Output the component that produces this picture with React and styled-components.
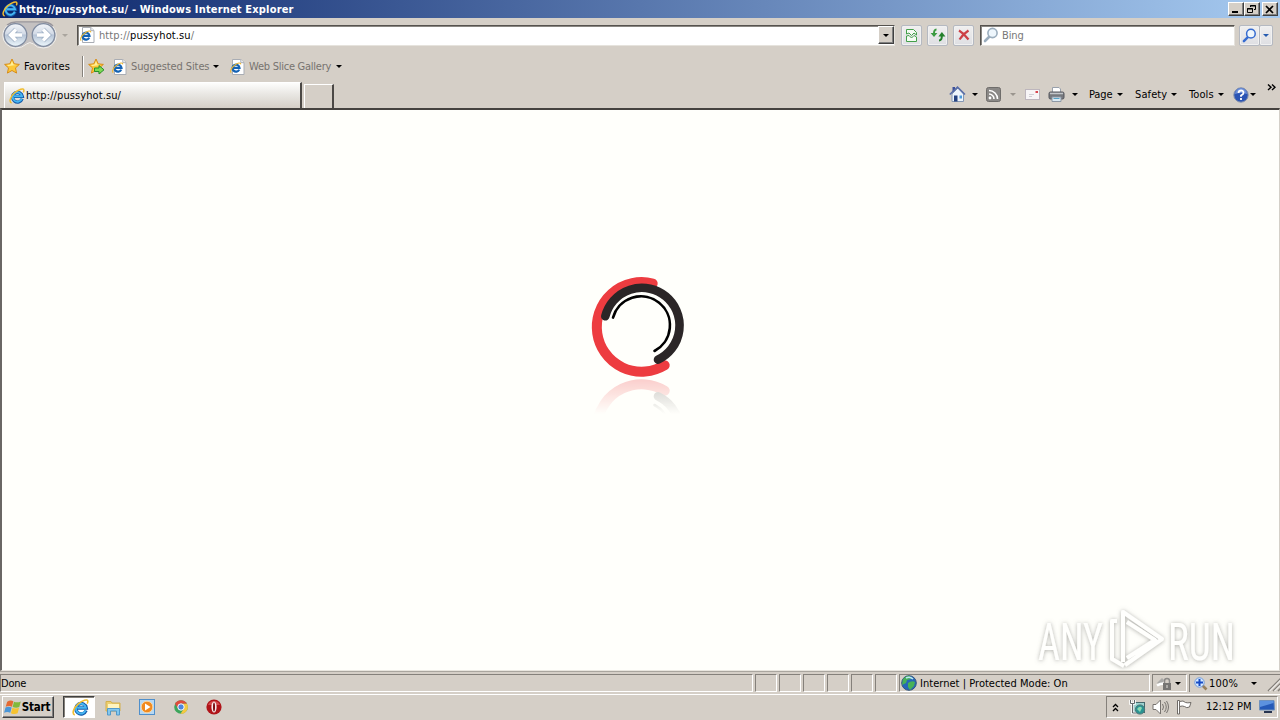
import React from 'react';
import styled, { createGlobalStyle, css } from 'styled-components';

const face = '#d5cfc7';
const ui = '"DejaVu Sans Condensed", "DejaVu Sans", sans-serif';

const GlobalStyle = createGlobalStyle`
  * { box-sizing: border-box; }
  body { margin: 0; overflow: hidden; }
  svg { display: block; flex: none; }
`;

const Desktop = styled.div`
  width: 1280px;
  height: 720px;
  display: flex;
  flex-direction: column;
  background: ${face};
  color: #000;
  font-family: ${ui};
  font-stretch: condensed;
  font-size: 11px;
  line-height: 14px;
`;
const Text = styled.span`
  flex: none;
  width: ${p => p.$w}px;
  margin-left: ${p => p.$ml || 0}px;
  padding-top: ${p => p.$drop || 0}px;
  letter-spacing: ${p => p.$ls ?? -0.1}px;
  color: ${p => p.$color || 'inherit'};
  white-space: nowrap;
`;
const Slot = styled.span`
  flex: none;
  display: block;
  margin-left: ${p => p.$ml || 0}px;
`;
const Arrow = styled.i`
  flex: none;
  width: 0;
  margin-left: ${p => p.$ml || 0}px;
  border: 3px solid transparent;
  border-top-color: ${p => p.$color || '#000'};
  border-bottom: 0;
`;

const sunken = css`
  border: 1px solid;
  border-color: #85817b #fff #fff #85817b;
`;
const raised = css`
  background: ${face};
  border: 1px solid;
  border-color: #fff #404040 #404040 #fff;
  box-shadow: inset -1px -1px #808080;
`;

/* title bar */
const TitleBar = styled.header`
  height: 18px;
  display: flex;
  align-items: center;
  padding-left: 2px;
  background: linear-gradient(90deg, #0a246a, #a6caf0);
  color: #fff;
  font-weight: bold;
`;
const WindowButtons = styled.div`
  display: flex;
  margin-left: auto;
  padding-right: 2px;
`;
const WindowButton = styled.button`
  ${raised}
  width: 16px;
  height: 14px;
  padding: 0;
  margin-left: ${p => p.$gap || 0}px;
  display: flex;
  align-items: center;
  justify-content: center;
`;

/* navigation row */
const NavRow = styled.div`
  height: 34px;
  display: flex;
  align-items: center;
  padding-left: 2px;
`;
const Field = styled.div`
  flex: none;
  width: ${p => p.$w}px;
  height: 21px;
  margin-left: ${p => p.$ml}px;
  display: flex;
  align-items: center;
  padding-left: 2px;
  background: #fff;
  border: 1px solid;
  border-color: #55524e #e6e3dd #e6e3dd #55524e;
  box-shadow: inset 1px 1px #8a8782;
`;
const DropButton = styled.button`
  ${raised}
  width: 16px;
  height: 18px;
  padding: 0;
  margin-left: auto;
  display: flex;
  align-items: center;
  justify-content: center;
`;
const ToolButton = styled.button`
  flex: none;
  width: ${p => p.$w || 21}px;
  height: 21px;
  margin-left: ${p => p.$ml}px;
  padding: 0;
  display: flex;
  align-items: center;
  justify-content: center;
  background: linear-gradient(#f0efef, #dedfe3);
  border: 1px solid #b5b9c1;
  border-radius: 2px;
  box-shadow: inset 0 0 0 1px #f1f1f1;
`;

/* favorites row */
const FavoritesRow = styled.div`
  height: 29px;
  display: flex;
  align-items: center;
  padding-left: 4px;
`;
const Divider = styled.i`
  height: 21px;
  margin-left: 11px;
  border-left: 1px solid #85817b;
  border-right: 1px solid #fff;
`;

/* tab row */
const TabRow = styled.div`
  height: 27px;
  display: flex;
  align-items: flex-end;
  padding-left: 4px;
`;
const Tab = styled.div`
  width: 298px;
  height: 26px;
  display: flex;
  align-items: center;
  padding-left: 4px;
  background: linear-gradient(#fdfdfc, #e9e7e3 45%, ${face});
  border-left: 1px solid #fff;
  border-top: 1px solid #fff;
  border-right: 2px solid #4b4845;
`;
const NewTab = styled.div`
  width: 30px;
  height: 24px;
  margin-left: 2px;
  border: 1px solid #fff;
  border-right: 2px solid #4b4845;
  border-bottom: 0;
`;
const CommandBar = styled.div`
  height: 27px;
  margin-left: auto;
  display: flex;
  align-items: center;
`;
const Chevron = styled(Slot)`
  align-self: flex-start;
  margin-right: 4px;
  padding-top: 3px;
`;

/* page */
const Page = styled.main`
  position: relative;
  height: 563px;
  display: flex;
  justify-content: center;
  padding-top: 165px;
  padding-right: 7px;
  background: #fffffb;
  border-top: 2px solid #45423f;
  border-left: 2px solid #6a6764;
  border-right: 1px solid #d4d0c8;
  border-bottom: 1px solid #e9e6df;
`;
const Watermark = styled.svg`
  position: absolute;
  left: 1026px;
  top: 491px;
  overflow: visible;
`;

/* status bar */
const StatusBar = styled.footer`
  height: 24px;
  display: flex;
  padding: 2px 0 2px;
  border-top: 1px solid #aaa69f;
  border-bottom: 1px solid #fff;
  gap: 2px;
`;
const Panel = styled.div`
  ${sunken}
  width: ${p => p.$w}px;
  flex: none;
  display: flex;
  align-items: center;
`;
const Grip = styled.div`
  flex: 1;
  display: flex;
  align-items: center;
  border-top: 1px solid #85817b;
  border-left: 1px solid #85817b;
`;

/* task bar */
const TaskBar = styled.nav`
  height: 25px;
  display: flex;
  align-items: center;
  padding: 0 2px 1px;
`;
const Start = styled.button`
  ${raised}
  width: 52px;
  height: 22px;
  padding: 0 0 0 1px;
  display: flex;
  align-items: center;
  font: bold 11.5px/14px ${ui};
  font-stretch: condensed;
`;
const ActiveTask = styled.div`
  width: 32px;
  height: 22px;
  margin-left: 9px;
  padding-left: 2px;
  display: flex;
  align-items: center;
  justify-content: center;
  background: #fff;
  border: 1px solid;
  border-color: #404040 #fff #fff #404040;
  box-shadow: inset 1px 1px #85817b;
`;
const Tray = styled.div`
  ${sunken}
  width: 172px;
  height: 22px;
  margin-left: auto;
  display: flex;
  align-items: center;
`;

const Explorer = ({ size = 16 }) => (
  <svg width={size} height={size} viewBox="0 0 16 16">
    <path d="M13.200 10.800A4.900 4.900 0 1 1 13.400 8.400H5" fill="none" stroke="#1259a8" strokeWidth="3.200" />
    <path d="M12.800 10.600A4.700 4.700 0 1 1 13 8.200H5" fill="none" stroke="#45b6f2" strokeWidth="1.900" />
    <path d="M2.600 15C-.4 14 1.400 8.400 5.600 4.800 9.800 1.200 14.800-.4 14.900 2.200q0 1-.6 2.200" fill="none" stroke="#f1bd2f" strokeWidth="1.500" />
  </svg>
);

const PageIcon = () => (
  <svg width="15" height="16" viewBox="0 0 15 16">
    <path d="M2.500.5h8.300l3.200 3v12H2.500z" fill="#fff" stroke="#a9adb4" />
    <path d="M10.800.5v3.200H14" fill="#eef1f5" stroke="#a9adb4" />
    <path d="M9.200 10.600A3.500 3.500 0 1 1 9.500 8.800H3" fill="none" stroke="#1563b4" strokeWidth="2.200" />
    <path d="M1.200 13.600C-.4 12.500 1.500 8.500 4.600 6.200 7.600 3.800 11 3.200 10.600 5.400" fill="none" stroke="#edb732" strokeWidth="1.100" />
  </svg>
);

const RoundButtons = () => (
  <svg width="56" height="28" viewBox="0 0 56 28">
    <defs>
      <linearGradient id="orb" x2="0" y2="1">
        <stop offset="0" stopColor="#f2f5f9" />
        <stop offset=".45" stopColor="#d2dae6" />
        <stop offset=".5" stopColor="#b6c4d6" />
        <stop offset="1" stopColor="#eef8fd" />
      </linearGradient>
    </defs>
    <path d="M13.500 1.500h28a12 12 0 0 1 0 25.500q-7 0-10-4-4-3-7 0-4 4-11 4a12 12 0 0 1 0-25.500z" fill="#c4c1c1" stroke="#f1f0ee" />
    <path d="M5 4Q9 1 14 1h27q6 0 10 4" fill="none" stroke="#98959b" strokeWidth="1.400" />
    <circle cx="13.500" cy="14" r="11.300" fill="url(#orb)" stroke="#7f8ba0" strokeWidth="1.200" />
    <circle cx="41.500" cy="14" r="11.300" fill="url(#orb)" stroke="#7f8ba0" strokeWidth="1.200" />
    <g fill="none" stroke="#9badc3" strokeWidth="4.800">
      <path d="M20 14H9M14 8.500L8.500 14l5.500 5.500M35 14h11M41 8.500l5.500 5.500-5.500 5.500" />
    </g>
    <g fill="none" stroke="#fff" strokeWidth="3.400">
      <path d="M20 14H9M14 8.500L8.500 14l5.500 5.500M35 14h11M41 8.500l5.500 5.500-5.500 5.500" />
    </g>
  </svg>
);

const Star = ({ add }) => (
  <svg width="17" height="17" viewBox="0 0 17 17">
    <path d="M8 1l2.200 4.800 5.200.6-3.900 3.500 1.100 5.200L8 12.500l-4.600 2.600 1.100-5.200L.6 6.400l5.200-.6z" fill="#fdc839" stroke="#d5860f" strokeWidth=".9" />
    <path d="M8 3l1.400 3.500 3 .5-8 1-1.600-1 3.700-.4z" fill="#fff09a" />
    {add && <path d="M6.500 10h4.500V7.600l5 4.200-5 4.200v-2.500H6.500z" fill="#7edb54" stroke="#27902b" />}
  </svg>
);

const Lens = ({ color, fill = '#eef6fc', size = 16 }) => (
  <svg width={size} height={size} viewBox="0 0 16 16">
    <path d="M6.500 9.500L2 14" stroke={color} strokeWidth="2.600" strokeLinecap="round" />
    <circle cx="9.500" cy="6" r="4.600" fill={fill} stroke={color} strokeWidth="1.600" />
  </svg>
);

const Compat = () => (
  <svg width="13" height="15" viewBox="0 0 13 15" fill="#f5fbf3" stroke="#43a04a">
    <path d="M1.500 6V1.500h7l3 3V7L9 5 6.500 7.500 4 5z" />
    <path d="M1.500 8v5.500h10V9L9 7.500 6.500 10 4 7.500z" />
  </svg>
);

const Refresh = () => (
  <svg width="16" height="14" viewBox="0 0 16 14">
    <path d="M6.500 1.500Q3.800 1.500 4 6" fill="none" stroke="#3a9b40" strokeWidth="2" />
    <path d="M.6 5h6.800L4 9z" fill="#3a9b40" />
    <path d="M9 12.500q3 0 2.800-5" fill="none" stroke="#23802b" strokeWidth="2" />
    <path d="M8.400 8.500h7L11.900 4z" fill="#23802b" />
  </svg>
);

const Stop = () => (
  <svg width="12" height="12" viewBox="0 0 12 12">
    <path d="M1 1.500q5 3 9.500 9M10.500 1.500Q5 5 1.500 10.500" fill="none" stroke="#cc4046" strokeWidth="2.200" />
  </svg>
);

const Home = () => (
  <svg width="17" height="17" viewBox="0 0 17 17">
    <path d="M3.500 1H6v5H3.500z" fill="#3c4f99" />
    <path d="M3 8l6-6 5.500 6v7.500H3z" fill="#edf4fb" stroke="#8497b5" />
    <path d="M.8 8.500L8.500 1.200l7.500 7.300" fill="none" stroke="#586da8" strokeWidth="1.600" />
    <path d="M5 9.500h3.500v6H5z" fill="#24417f" />
    <path d="M10.500 9.500H13v3h-2.500z" fill="#4c9bdb" />
  </svg>
);

const Feed = () => (
  <svg width="15" height="15" viewBox="0 0 15 15">
    <rect x=".5" y=".5" width="14" height="14" rx="2" fill="#8a8886" stroke="#6f6d6b" />
    <circle cx="4" cy="11" r="1.400" fill="#fff" />
    <path d="M3 7a5 5 0 0 1 5 5M3 3.500A8.500 8.500 0 0 1 11.500 12" fill="none" stroke="#fff" strokeWidth="1.600" />
  </svg>
);

const Mail = () => (
  <svg width="15" height="11" viewBox="0 0 15 11">
    <rect x=".5" y=".5" width="14" height="10" fill="#f7f5f6" stroke="#bdb6bd" />
    <path d="M10.500 2H13v2h-2.500z" fill="#d8464e" />
    <path d="M4 5.500h5M4 7.500h3" stroke="#d0ced4" />
  </svg>
);

const Printer = () => (
  <svg width="17" height="17" viewBox="0 0 17 17">
    <path d="M4.500 7V1.500H11L12.500 3v4" fill="#fff" stroke="#98a0ab" />
    <rect x="1" y="6" width="15" height="7" rx="1.500" fill="#77797e" stroke="#55575c" />
    <path d="M2 7.500h13" stroke="#c3c6ca" strokeWidth="1.500" />
    <path d="M4 11h9v4.500H4z" fill="#dceaf3" stroke="#8d98a5" />
    <path d="M5.500 12.500h6" stroke="#56a3c7" />
  </svg>
);

const Help = () => (
  <svg width="16" height="16" viewBox="0 0 16 16">
    <circle cx="8" cy="8" r="7.200" fill="#2b54b4" stroke="#8390ac" />
    <path d="M2 7a6 6 0 0 1 12 0q-6-2-12 0z" fill="#6d8fd8" />
    <path d="M5.500 6q.2-2.500 2.600-2.500T10.500 6Q10.500 7.200 8 8.500v1.300M8 11v2" fill="none" stroke="#fff" strokeWidth="1.800" />
  </svg>
);

const Spinner = () => (
  <svg width="100" height="142" viewBox="0 0 100 142" fill="none" strokeLinecap="round">
    <defs>
      <linearGradient id="fade" x2="0" y2="1">
        <stop offset="0" stopColor="#fff" stopOpacity=".26" />
        <stop offset="1" stopColor="#fff" stopOpacity="0" />
      </linearGradient>
      <mask id="reflection" maskUnits="userSpaceOnUse" x="0" y="103" width="100" height="36">
        <rect y="103" width="100" height="36" fill="url(#fade)" />
      </mask>
      <g id="rings">
        <path d="M65.700 8.500A44.800 44.800 0 1 0 77.700 90.300" stroke="#ed3c40" strokeWidth="10" />
        <path d="M18.300 41.300A37.700 37.700 0 1 1 71 84.600" stroke="#2b2627" strokeWidth="8.600" />
        <path d="M26 42.600A29 29 0 1 1 67.500 76" stroke="#000" strokeWidth="2.600" />
      </g>
    </defs>
    <use href="#rings" />
    <g mask="url(#reflection)">
      <use href="#rings" transform="matrix(1 0 0 -1 0 206)" />
    </g>
  </svg>
);

const Logo = () => (
  <Watermark width="220" height="70" viewBox="0 0 220 70">
    <defs>
      <filter id="halo" x="-10%" y="-20%" width="120%" height="140%">
        <feDropShadow dx="0" dy=".5" stdDeviation="2" floodColor="#77776f" floodOpacity=".6" />
      </filter>
    </defs>
    <g filter="url(#halo)" fill="#fffffd" fontFamily="Roboto, sans-serif" fontSize="51">
      <text x="10" y="59" textLength="65" lengthAdjust="spacingAndGlyphs">ANY</text>
      <text x="140" y="59" textLength="67" lengthAdjust="spacingAndGlyphs">RUN</text>
      <g fill="none" stroke="#fffffd" strokeWidth="4" strokeLinejoin="round">
        <path d="M89 20h-5v38l12 7" />
        <path d="M95 61V11l39 27-37 26M99 21l28 18-28 18" />
      </g>
    </g>
  </Watermark>
);

const Globe = () => (
  <svg width="16" height="16" viewBox="0 0 16 16">
    <circle cx="8" cy="8" r="7.300" fill="#2567b9" stroke="#34567b" />
    <path d="M2 4q4-4 7-3l1 3-4 1-1 3-4 2zM7 8q4-3 7-1l-1 4-4 4-2-3z" fill="#47b257" />
    <path d="M5 3q4-2 7 1" fill="none" stroke="#b9e8f5" strokeWidth="1.500" />
  </svg>
);

const Lock = () => (
  <svg width="16" height="15" viewBox="0 0 16 15">
    <path d="M1 7l5-5 2 2-3 5z" fill="#aaa9a7" />
    <path d="M1 9.500q3-2 7-2" fill="none" stroke="#fff" strokeWidth="2.400" />
    <path d="M8.500 8V5a2.500 2.500 0 0 1 5 0v3" fill="none" stroke="#8b8987" strokeWidth="1.500" />
    <rect x="7" y="7" width="8" height="7" fill="#777573" />
    <path d="M11 9v3" stroke="#e3e0db" />
  </svg>
);

const Zoom = () => (
  <svg width="14" height="14" viewBox="0 0 14 14">
    <path d="M8 8l4.500 4.500" stroke="#97815d" strokeWidth="2.600" />
    <circle cx="5.500" cy="5.500" r="4.700" fill="#d6eaff" stroke="#6f9bdd" />
    <path d="M5.500 2v7M2 5.500h7" stroke="#164bc5" strokeWidth="2" />
  </svg>
);

const WindowsFlag = () => (
  <svg width="17" height="17" viewBox="0 0 16 16">
    <path d="M3 2.500q3-2 5.800-.5L7.500 7.200Q5 5.800 1.600 7.200z" fill="#e46a32" />
    <path d="M9.400 2.500q3 1.300 6.400-.2L14.400 7.600q-3 1.400-6.300-.1z" fill="#82b93b" />
    <path d="M1.400 7.900q3-1.400 5.800.1l-1.300 5Q3.200 11.400.1 12.900z" fill="#4a96d7" />
    <path d="M7.900 8.300q3 1.400 6.300 0l-1.400 5.100q-3 1.500-6.300-.1z" fill="#f6c331" />
  </svg>
);

const Folder = () => (
  <svg width="17" height="17" viewBox="0 0 17 17">
    <path d="M1 2.500h5L7 4h8v8H1z" fill="#edcf70" stroke="#d4b04c" />
    <path d="M3 5h11v5H3z" fill="#fff4bf" />
    <path d="M2.500 16V9.500h12V16h-3v-4h-6v4z" fill="#83c8ee" stroke="#5299cb" />
  </svg>
);

const Media = () => (
  <svg width="16" height="16" viewBox="0 0 16 16">
    <rect x=".5" y=".5" width="15" height="15" fill="#b7d8f2" stroke="#4f8fcb" />
    <circle cx="8" cy="8" r="5.800" fill="#f18a1e" stroke="#fbd39c" />
    <path d="M6 4.500L11.500 8 6 11.500z" fill="#fff" />
  </svg>
);

const Chrome = () => (
  <svg width="14" height="14" viewBox="0 0 14 14">
    <circle cx="7" cy="7" r="6.800" fill="#3ca55b" />
    <path d="M1 3.800A6.800 6.800 0 0 1 13 3.800H7L4 8.500z" fill="#df4b3c" />
    <path d="M13 3.800a6.800 6.800 0 0 1-6.500 10L10 8.500 9 3.800z" fill="#f6c941" />
    <circle cx="7" cy="7" r="3.200" fill="#4e86dd" stroke="#fff" />
  </svg>
);

const Opera = () => (
  <svg width="16" height="16" viewBox="0 0 16 16">
    <circle cx="8" cy="8" r="7.600" fill="#b01419" />
    <path d="M2 6a6.500 6.500 0 0 1 12 0z" fill="#d4494b" />
    <ellipse cx="8" cy="8" rx="2.600" ry="5.600" fill="#f8eeee" />
    <ellipse cx="8" cy="8" rx="1" ry="4.500" fill="#7d0d12" />
  </svg>
);

const Network = () => (
  <svg width="17" height="16" viewBox="0 0 17 16">
    <rect x="4.500" y="3.500" width="11" height="10" fill="#9bd3d0" stroke="#46686d" />
    <path d="M1.500 1v3.500h4V1M3.500 5v9H8" fill="none" stroke="#fff" strokeWidth="2.600" />
    <path d="M1.500 1v3.500h4V1M3.500 5v9H8" fill="none" stroke="#62686b" />
    <circle cx="11" cy="10.500" r="4.600" fill="#299492" stroke="#507678" />
    <path d="M8 10q3-4 5-1l-2 4z" fill="#8cd8b5" />
  </svg>
);

const Speaker = () => (
  <svg width="17" height="16" viewBox="0 0 17 16" fill="none" stroke="#77736f">
    <path d="M1 5.500h3L8.500 1v14L4 10.500H1z" fill="#fff" />
    <path d="M10.500 5q2 3 0 6M12.500 3q3.500 5 0 10M14.500 2q4 6 0 12" />
  </svg>
);

const ActionFlag = () => (
  <svg width="17" height="16" viewBox="0 0 17 16" fill="#fff" stroke="#6f6b67">
    <path d="M1.500 1.500h2V15h-2z" />
    <path d="M3.500 2.500q4-1.500 6 1 2 .7 5.500 0L13.500 8q-3 1.500-5-.5-2-1-5 0z" />
  </svg>
);

const Monitor = () => (
  <svg width="16" height="14" viewBox="0 0 16 14">
    <path d="M.5.5H15l.5 9.500H.5z" fill="#255ab8" stroke="#6f91bd" />
    <path d="M1 1h13.500v2L1 7z" fill="#5c92df" />
    <path d="M5 12h8" stroke="#27344f" strokeWidth="2" />
  </svg>
);

const App = () => (
  <>
    <GlobalStyle />
    <Desktop>
      <TitleBar>
        <Explorer />
        <Text $ml={1} $w={280} $ls={0.17} $drop={1}>http://pussyhot.su/ - Windows Internet Explorer</Text>
        <WindowButtons>
          <WindowButton>
            <svg width="10" height="9"><path d="M1 7h6" stroke="#000" strokeWidth="2" /></svg>
          </WindowButton>
          <WindowButton>
            <svg width="10" height="10" fill="none" stroke="#000">
              <path d="M3.500 3V1.500h5v4H7M3 2h6M.5 4.500h5v4h-5zM0 5h6" />
            </svg>
          </WindowButton>
          <WindowButton $gap={2}>
            <svg width="10" height="9"><path d="M1 1l7 7M8 1L1 8" stroke="#000" strokeWidth="1.700" /></svg>
          </WindowButton>
        </WindowButtons>
      </TitleBar>

      <NavRow>
        <RoundButtons />
        <Arrow $ml={4} $color="#aaa59e" />
        <Field $w={818} $ml={9}>
          <PageIcon />
          <Text $ml={4} $w={110} $ls={0.1} $drop={2} $color="#777">
            http://
            <Text $ls={0.1} $color="#000">pussyhot.su</Text>
            /
          </Text>
          <DropButton><Arrow /></DropButton>
        </Field>
        <ToolButton $ml={6}><Compat /></ToolButton>
        <ToolButton $ml={5}><Refresh /></ToolButton>
        <ToolButton $ml={5}><Stop /></ToolButton>
        <Field $w={255} $ml={6}>
          <Lens color="#9badbd" />
          <Text $ml={3} $w={30} $drop={2} $color="#777">Bing</Text>
        </Field>
        <ToolButton $w={21} $ml={4}><Lens color="#356bd0" size={15} /></ToolButton>
        <ToolButton $w={14} $ml={-1}><Arrow $color="#255bb0" /></ToolButton>
      </NavRow>

      <FavoritesRow>
        <Star />
        <Text $ml={3} $w={47} $ls={0.15}>Favorites</Text>
        <Divider />
        <Slot $ml={4}><Star add /></Slot>
        <Slot $ml={7}><PageIcon /></Slot>
        <Text $ml={4} $w={78} $drop={1} $color="#77736f">Suggested Sites</Text>
        <Arrow $ml={4} />
        <Slot $ml={11}><PageIcon /></Slot>
        <Text $ml={4} $w={83} $drop={1} $ls={-0.25} $color="#77736f">Web Slice Gallery</Text>
        <Arrow $ml={4} />
      </FavoritesRow>

      <TabRow>
        <Tab>
          <Explorer />
          <Text $ml={1} $w={110} $ls={0.1} $drop={1}>http://pussyhot.su/</Text>
        </Tab>
        <NewTab />
        <CommandBar>
          <Home />
          <Arrow $ml={6} />
          <Slot $ml={8}><Feed /></Slot>
          <Arrow $ml={9} $color="#9a958e" />
          <Slot $ml={9}><Mail /></Slot>
          <Slot $ml={8}><Printer /></Slot>
          <Arrow $ml={7} />
          <Text $ml={11} $w={25}>Page</Text>
          <Arrow $ml={3} />
          <Text $ml={12} $w={33} $ls={0.1}>Safety</Text>
          <Arrow $ml={3} />
          <Text $ml={12} $w={26} $ls={0.1}>Tools</Text>
          <Arrow $ml={3} />
          <Slot $ml={9}><Help /></Slot>
          <Arrow $ml={1} />
          <Chevron $ml={11}>
            <svg width="9" height="7" fill="none" stroke="#000" strokeWidth="1.400">
              <path d="M1 .5l3 2.700-3 2.800M5 .5l3 2.700L5 6" />
            </svg>
          </Chevron>
        </CommandBar>
      </TabRow>

      <Page>
        <Spinner />
        <Logo />
      </Page>

      <StatusBar>
        <Panel $w={753}><Text $w={30} $drop={1} $ls={-0.2}>Done</Text></Panel>
        {[0, 1, 2, 3, 4, 5].map(n => <Panel key={n} $w={22} />)}
        <Panel $w={251}>
          <Slot $ml={1}><Globe /></Slot>
          <Text $ml={3} $w={150} $drop={1} $ls={0.03}>Internet | Protected Mode: On</Text>
        </Panel>
        <Panel $w={35}>
          <Slot $ml={3}><Lock /></Slot>
          <Arrow $ml={3} />
        </Panel>
        <Grip>
          <Slot $ml={4}><Zoom /></Slot>
          <Text $ml={1} $w={30} $drop={1} $ls={0.2}>100%</Text>
          <Arrow $ml={12} />
          <Slot $ml={9}>
            <svg width="15" height="17" stroke="#85817b" strokeWidth="1.500">
              <path d="M2 16L15 3M7 16l8-8M12 16l3-3" />
              <path d="M3.500 16L15 4.500M8.500 16L15 9.500" stroke="#fff" strokeWidth="1" />
            </svg>
          </Slot>
        </Grip>
      </StatusBar>

      <TaskBar>
        <Start>
          <WindowsFlag />
          <Text $w={30} $ls={-0.2}>Start</Text>
        </Start>
        <ActiveTask><Explorer size={17} /></ActiveTask>
        <Slot $ml={10}><Folder /></Slot>
        <Slot $ml={17}><Media /></Slot>
        <Slot $ml={19}><Chrome /></Slot>
        <Slot $ml={18}><Opera /></Slot>
        <Tray>
          <Slot $ml={5}>
            <svg width="8" height="9" fill="none" stroke="#000" strokeWidth="1.300">
              <path d="M1 4l2.500-2.500L6 4M1 8l2.500-2.500L6 8" />
            </svg>
          </Slot>
          <Slot $ml={9}><Network /></Slot>
          <Slot $ml={6}><Speaker /></Slot>
          <Slot $ml={7}><ActionFlag /></Slot>
          <Text $ml={13} $w={45}>12:12 PM</Text>
          <Slot $ml={8}><Monitor /></Slot>
        </Tray>
      </TaskBar>
    </Desktop>
  </>
);

export default App;
